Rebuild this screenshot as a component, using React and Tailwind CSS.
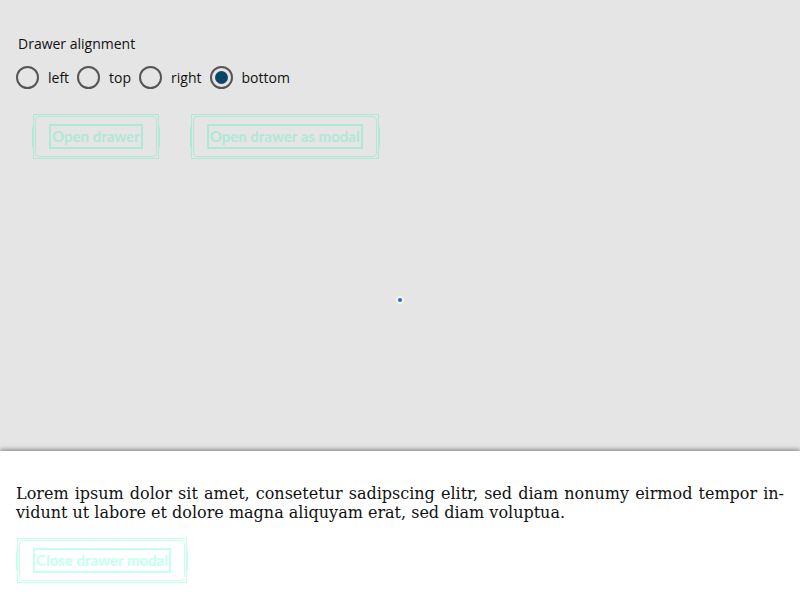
const font = { fontFamily: '"Open Sans", "Noto Sans", sans-serif' };
const btnFont = { fontFamily: 'Lato, "Noto Sans", sans-serif' };

const Radio = ({ label, checked }) => (
  <label className="flex items-center gap-[9px] mr-[8px]">
    <span className="w-[23px] h-[23px] rounded-full border-2 border-[#555] flex items-center justify-center">
      {checked && <span className="w-[13px] h-[13px] rounded-full bg-[#0b4669]" />}
    </span>
    <span className="text-[14px] text-[#111]">{label}</span>
  </label>
);

const GhostButton = ({ children, tone }) => (
  <div className={`relative border ${tone} p-px`} style={btnFont}>
    <span className={`absolute -left-[2px] top-1/2 -translate-y-1/2 h-[20px] border-l-2 ${tone}`} />
    <span className={`absolute -right-[2px] top-1/2 -translate-y-1/2 h-[20px] border-r-2 ${tone}`} />
    <div className={`border ${tone} rounded-[4px] px-[13px] py-[7px] flex`}>
      <span className={`border-2 ${tone} px-px text-[15px] font-bold leading-[21px]`}>{children}</span>
    </div>
  </div>
);

export default function App() {
  return (
    <div className="w-[800px] h-[600px] bg-[#e5e5e5] flex flex-col overflow-hidden" style={font}>
      <div className="flex-1 relative px-[16px] pt-[33px]">
        <div className="text-[14px] text-[#111] pl-[2px]">Drawer alignment</div>
        <div className="flex items-center mt-[12px]">
          <Radio label="left" />
          <Radio label="top" />
          <Radio label="right" />
          <Radio label="bottom" checked />
        </div>
        <div className="flex gap-[32px] mt-[25px] pl-[17px] text-[#b0e8d8]">
          <GhostButton tone="border-[#b0e8d8]">Open drawer</GhostButton>
          <GhostButton tone="border-[#b0e8d8]">Open drawer as modal</GhostButton>
        </div>
        <span className="absolute left-[398px] top-[298px] w-[4px] h-[4px] rounded-full bg-[#1a6fe0] ring-2 ring-white/60" />
      </div>
      <div className="h-[149px] bg-white shadow-[0_-2px_4px_rgba(0,0,0,0.35)] px-[16px] pt-[33px]">
        <p
          className="text-[16px] leading-[19px] text-[#111] text-justify"
          style={{ fontFamily: '"DejaVu Serif", serif', hyphens: "auto" }}
          lang="en"
        >
          Lorem ipsum dolor sit amet, consetetur sadipscing elitr, sed diam nonumy eirmod tempor in&shy;vidunt ut labore et dolore magna aliquyam erat, sed diam voluptua.
        </p>
        <div className="flex mt-[16px] pl-px text-[#c4fff0]">
          <GhostButton tone="border-[#c4fff0]">Close drawer modal</GhostButton>
        </div>
      </div>
    </div>
  );
}
